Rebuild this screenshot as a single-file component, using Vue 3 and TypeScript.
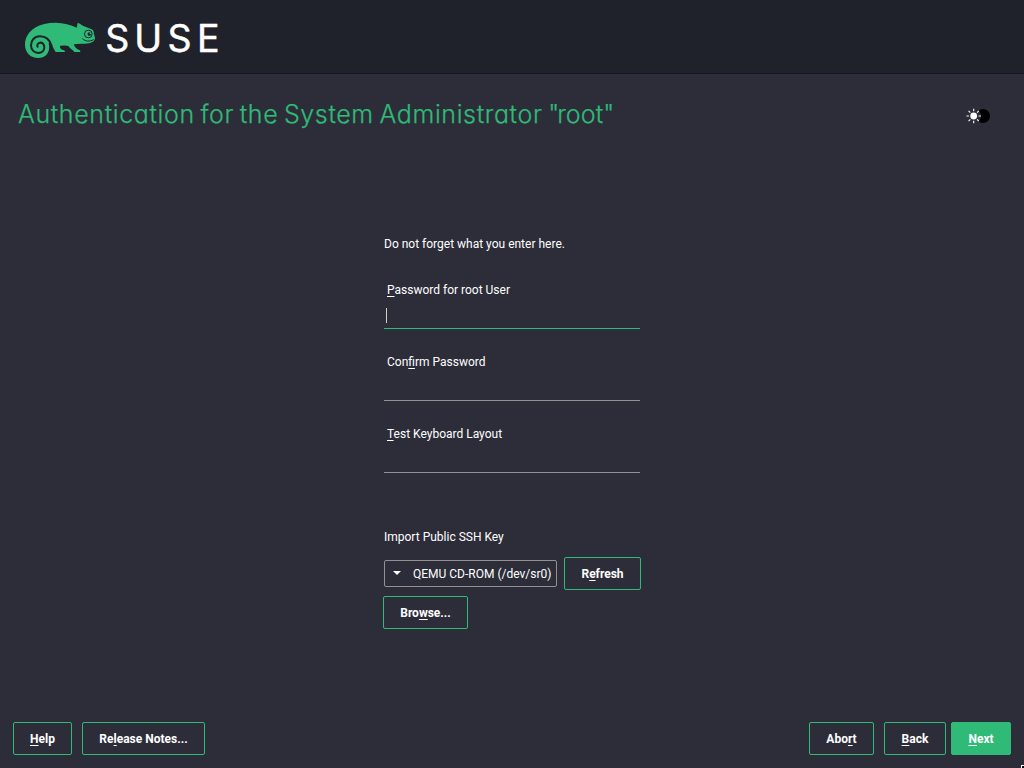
<script setup lang="ts">
interface Label {
  before: string
  key: string
  after: string
}

interface Field extends Label {
  id: string
  active: boolean
}

const fields: Field[] = [
  { id: 'password', before: '', key: 'P', after: 'assword for root User', active: true },
  { id: 'confirm', before: 'Con', key: 'f', after: 'irm Password', active: false },
  { id: 'layout', before: '', key: 'T', after: 'est Keyboard Layout', active: false },
]
</script>

<template>
  <div class="installer">
    <header class="banner">
      <svg class="logo" width="210" height="50" viewBox="0 0 210 50" role="img" aria-label="SUSE">
        <g transform="translate(-5 -5) scale(0.33333)">
          <path
            class="green"
            d="M30 104 C30 82 42 64 60 53 C76 43 98 38 122 38 C146 38 167 45 185 53 C188 50 185 42 189 38 C194 41 199 44 205 48 L230 58 C236 61 236 66 237 72 L240 84 C240 92 232 98 222 100 C207 103 188 101 176 103 C179 111 184 117 193 120 C197 122 197 126 194 126 L178 126 C174 119 168 120 161 109 C153 105 145 108 135 107 C134 115 138 119 147 121 C151 123 151 126 148 126 L122 126 C117 119 113 107 106 99 L101 99 C108 126 92 144 70 144 C46 144 30 127 30 104 Z"
          />
          <path
            class="spiral"
            d="M110 108 C104 88 91 79 75 79 C58 79 48 91 48 106 C48 120 58 129 70 129 C81 129 88 121 88 112 C88 103 82 97 75 98 C68 99 65 105 68 110"
          />
          <circle class="eye" cx="220" cy="72" r="11.5" />
          <circle class="pupil" cx="223" cy="72" r="5.5" />
          <circle class="green" cx="226" cy="70" r="2.4" />
          <path class="mouth" d="M202 86 C212 95 224 95 236 89" />
        </g>
        <text class="wordmark" y="36.7" x="85.3 114.2 147.4 177">SUSE</text>
      </svg>
    </header>

    <div class="heading">
      <h1>Authentication for the System Administrator <span class="quoted"><span class="quote">"</span>root"</span></h1>
      <svg class="theme" width="26" height="18" viewBox="0 0 26 18">
        <circle cx="18" cy="9" r="7" fill="#000" />
        <circle cx="8.7" cy="9" r="7.3" fill="#2c2d39" />
        <circle cx="8.7" cy="9" r="3.4" fill="#fff" />
        <path
          d="M8.7 1.8v2.4M8.7 13.8v2.4M1.5 9h2.4M13.5 9h2.4M3.6 3.9l1.7 1.7M12.1 12.4l1.7 1.7M3.6 14.1l1.7-1.7M12.1 5.6l1.7-1.7"
          stroke="#fff"
          stroke-width="1.1"
        />
      </svg>
    </div>

    <main class="content">
      <p class="hint">Do not forget what you enter here.</p>
      <div v-for="field in fields" :key="field.id" class="field">
        <label>{{ field.before }}<u>{{ field.key }}</u>{{ field.after }}</label>
        <div class="entry" :class="{ active: field.active }">
          <span v-if="field.active" class="caret"></span>
        </div>
      </div>
      <p class="section">Import Public SSH Key</p>
      <div class="device">
        <div class="select">
          <svg width="8" height="5" viewBox="0 0 8 5"><path d="M0 0h8L4 4z" fill="#fff" /></svg>
          <span>QEMU CD-ROM (/dev/sr0)</span>
        </div>
        <button class="refresh">R<u>e</u>fresh</button>
      </div>
      <button class="browse">Bro<u>w</u>se...</button>
    </main>

    <footer class="actions">
      <button class="help"><u>H</u>elp</button>
      <button class="notes">Re<u>l</u>ease Notes...</button>
      <button class="abort">Abo<u>r</u>t</button>
      <button class="back"><u>B</u>ack</button>
      <button class="next"><u>N</u>ext</button>
    </footer>

    <svg class="pointer" width="3" height="3" viewBox="0 0 3 3">
      <path d="M0 0h3v1H1v2H0z" fill="#fff" />
      <path d="M1 1h2v2H1z" fill="#000" />
    </svg>
  </div>
</template>

<style>
html,
body {
  margin: 0;
  background: #2c2d39;
}
</style>

<style scoped>
.installer {
  position: relative;
  display: flex;
  flex-direction: column;
  width: 1024px;
  height: 768px;
  overflow: hidden;
  box-sizing: border-box;
  background: #2c2d39;
  color: #fff;
  font: 12px/14px Roboto, sans-serif;
}

.banner {
  height: 74px;
  box-sizing: border-box;
  padding: 15px 0 0 20px;
  background: #20222b;
  border-bottom: 1px solid #14161f;
}

.logo {
  display: block;
}

.green {
  fill: #30ba78;
}

.spiral {
  fill: none;
  stroke: #20222b;
  stroke-width: 6;
  stroke-linecap: round;
}

.eye,
.mouth {
  fill: none;
  stroke: #20222b;
  stroke-width: 3;
}

.pupil {
  fill: #20222b;
}

.wordmark {
  fill: #fff;
  stroke: #fff;
  stroke-width: 0.5;
  stroke-linejoin: round;
  font: 400 37.5px Inter, sans-serif;
}

.heading {
  display: flex;
  justify-content: space-between;
  height: 84px;
  padding: 23px 33px 0 18px;
  box-sizing: border-box;
}

h1 {
  margin: 0;
  color: #30ba78;
  font: 300 25px/34px Inter, sans-serif;
  font-feature-settings: 'cv11';
  letter-spacing: 0.62px;
  word-spacing: -2px;
  -webkit-text-stroke: 0.25px #30ba78;
  white-space: nowrap;
}

.quoted {
  letter-spacing: 0.1px;
}

.quote {
  letter-spacing: -2px;
}

.theme {
  margin-top: 10px;
}

.content {
  width: 258px;
  margin: 79px 0 0 384px;
}

p {
  margin: 0;
}

.hint {
  height: 46px;
}

.field {
  width: 256px;
  height: 72px;
}

.field label {
  display: block;
  height: 18px;
  padding-left: 3px;
}

.entry {
  display: flex;
  height: 28px;
  box-sizing: border-box;
  border-bottom: 1px solid #939094;
}

.entry.active {
  border-color: #30ba78;
}

.caret {
  width: 1px;
  height: 15px;
  margin: 7px 0 0 2px;
  background: #d5d0c5;
}

.section {
  margin-top: 31px;
}

.device {
  display: flex;
  align-items: center;
  margin-top: 13px;
}

.select {
  display: flex;
  align-items: center;
  width: 173px;
  height: 27px;
  box-sizing: border-box;
  padding-left: 8px;
  border: 1px solid #939094;
  border-radius: 2px;
  white-space: nowrap;
}

.select span {
  margin-left: 12px;
}

u {
  text-decoration-thickness: 1px;
  text-underline-offset: 2px;
  text-decoration-skip-ink: none;
}

button {
  height: 33px;
  box-sizing: border-box;
  padding: 0;
  border: 1px solid #30ba78;
  border-radius: 2px;
  background: transparent;
  color: #fff;
  font: 700 12px/14px Roboto, sans-serif;
}

.refresh {
  width: 77px;
  margin-left: 7px;
}

.browse {
  width: 85px;
  margin: 6px 0 0 -1px;
}

.actions {
  display: flex;
  margin-top: auto;
  padding: 0 13px;
  margin-bottom: 13px;
}

.help {
  width: 59px;
}

.notes {
  width: 123px;
  margin-left: 10px;
}

.abort {
  width: 65px;
  margin-left: auto;
}

.back {
  width: 62px;
  margin-left: 10px;
}

.next {
  width: 60px;
  margin-left: 5px;
  background: #30ba78;
}

.pointer {
  position: absolute;
  right: 0;
  bottom: 0;
}
</style>
